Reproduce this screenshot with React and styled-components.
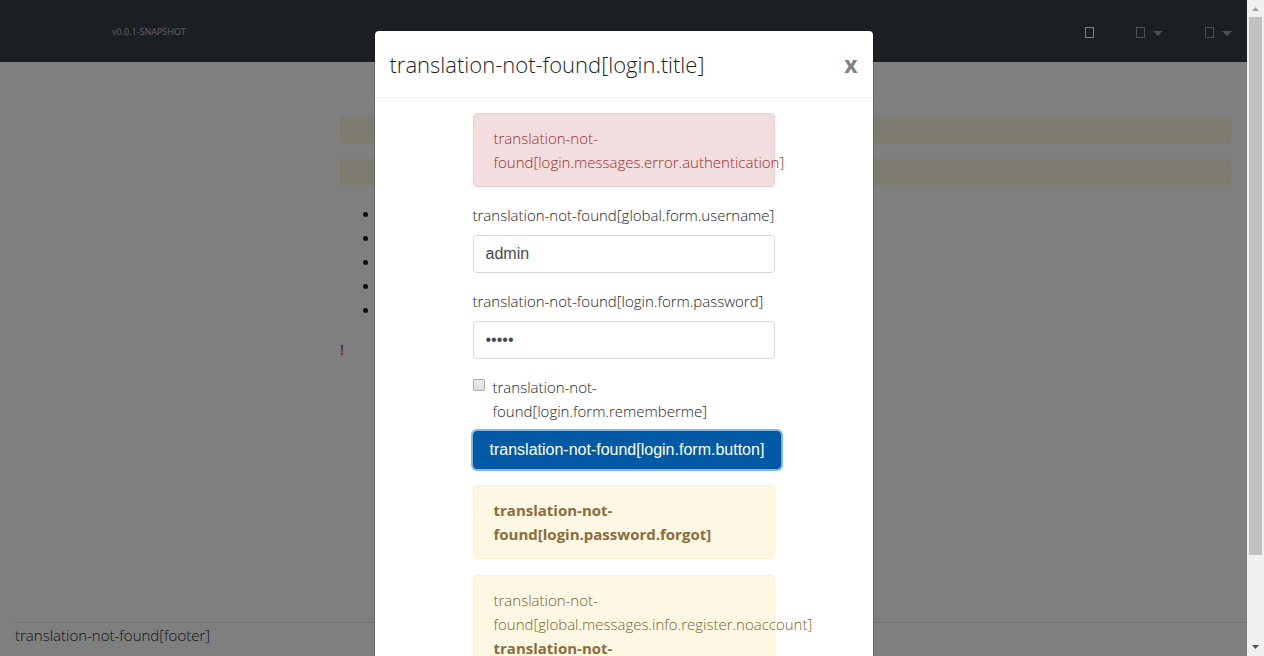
import React from "react";
import styled, { createGlobalStyle } from "styled-components";

const GlobalStyle = createGlobalStyle`
  *, *::before, *::after { box-sizing: border-box; }
  body {
    margin: 0;
    background: #fff;
    color: #1c1e1f;
    font-family: "Open Sans", "Noto Sans", sans-serif;
    font-size: 15px;
    font-weight: 300;
    line-height: 24px;
  }
`;

const Shell = styled.div`
  display: grid;
  grid-template-columns: minmax(0, 1fr) 17px;
  height: 100vh;
  overflow: hidden;
`;

const Page = styled.div`
  position: relative;
  display: flex;
  flex-direction: column;
  min-height: 0;
  overflow: hidden;
`;

const Navbar = styled.nav`
  display: flex;
  align-items: center;
  justify-content: space-between;
  padding: 18px 15px 16px 112px;
  height: 62px;
  background: #373d45;
  color: #c8c9cb;
`;

const Version = styled.span`
  font-size: 9px;
  font-weight: 400;
  color: #c4c5c7;
`;

const NavItems = styled.div`
  display: flex;
  align-items: center;
  gap: 42px;
`;

const NavButton = styled.button`
  display: flex;
  align-items: center;
  gap: 8px;
  padding: 0;
  border: 0;
  background: none;
  color: ${(p) => (p.$active ? "#fff" : "#9b9ea2")};
`;

const Glyph = styled.span`
  width: 9px;
  height: 11px;
  border: 1px solid currentColor;
`;

const Caret = styled.span`
  border: 5px solid transparent;
  border-top-color: currentColor;
  border-bottom: 0;
  margin-top: 2px;
`;

const Main = styled.main`
  display: grid;
  grid-template-columns: 4fr 11fr;
  padding: 55px 16px 0;
  flex: 1;
`;

const Content = styled.section`
  grid-column: 2;
`;

const Alert = styled.div`
  padding: 12px 20px;
  margin-bottom: 16px;
  border: 1px solid ${(p) => (p.$danger ? "#ebcccc" : "#faf2cc")};
  border-radius: 4px;
  background: ${(p) => (p.$danger ? "#f2dede" : "#fcf8e3")};
  color: ${(p) => (p.$danger ? "#a02c2a" : "#7d5f2d")};
`;

const BulletList = styled.ul`
  margin: 0 0 16px;
  padding-left: 40px;
  font-family: "Liberation Sans", sans-serif;
  font-size: 18px;
`;

const Notice = styled.p`
  margin: 0;
  color: #c00030;
  font-weight: 400;
`;

const Footer = styled.footer`
  padding: 0 0 9px 15px;

  p {
    margin: 0;
    border-top: 1px solid #e0e0e0;
  }
`;

const Backdrop = styled.div`
  position: absolute;
  inset: 0;
  overflow: hidden;
  padding-top: 30px;
  background: rgba(0, 0, 0, 0.5);
`;

const Dialog = styled.div`
  max-width: 500px;
  margin: 0 auto;
  border: 1px solid rgba(0, 0, 0, 0.2);
  border-radius: 5px;
  background: #fff;
  background-clip: padding-box;
`;

const DialogHeader = styled.header`
  display: flex;
  align-items: center;
  justify-content: space-between;
  padding: 15px;
  border-bottom: 1px solid #eceeef;
`;

const Title = styled.h4`
  margin: 0;
  font-size: 22px;
  font-weight: 300;
  line-height: 36px;
`;

const Close = styled.button`
  padding: 0;
  border: 0;
  background: none;
  color: #808080;
  font: 700 23px/24px "Open Sans", sans-serif;
`;

const DialogBody = styled.div`
  width: 66.6667%;
  margin: 0 auto;
  padding: 15px;
`;

const Field = styled.div`
  margin-bottom: 16px;

  label {
    display: block;
    margin-bottom: 8px;
    white-space: nowrap;
  }
`;

const TextInput = styled.input`
  display: block;
  width: 100%;
  height: 38px;
  padding: 8px 12px;
  border: 1px solid #d9d9d9;
  border-radius: 4px;
  background: #fff;
  color: #464a4c;
  font: 16px/20px "Liberation Sans", sans-serif;
  outline: 0;
`;

const CheckLabel = styled.label`
  display: flex;
  align-items: flex-start;
  gap: 8px;
  margin-bottom: 8px;
`;

const Checkbox = styled.input`
  appearance: none;
  flex: none;
  width: 12px;
  height: 12px;
  margin: 4px 0 0;
  border: 1px solid #aaa;
  border-radius: 2px;
  background: linear-gradient(#eee, #dcdcdc);
`;

const Submit = styled.button`
  display: block;
  height: 38px;
  margin-bottom: 16px;
  padding: 0 16px;
  border: 1px solid #01549b;
  border-radius: 4px;
  background: #025aa5;
  box-shadow: 0 0 0 2px rgba(2, 117, 216, 0.5);
  color: #fff;
  font: 16px/20px "Liberation Sans", sans-serif;
  white-space: nowrap;
`;

const AlertLink = styled.a`
  color: #8a6d3b;
  font-weight: 700;
  text-decoration: none;
`;

const ScrollTrack = styled.div`
  display: grid;
  grid-template-rows: 17px minmax(0, 1fr) 17px;
  justify-items: center;
  background: #f0f0f0;
`;

const ScrollThumb = styled.div`
  width: 13px;
  height: 86.5%;
  background: #c1c1c1;
`;

const ScrollArrow = styled.svg`
  display: block;
  width: 17px;
  height: 17px;
  fill: ${(p) => (p.$dim ? "#a3a3a3" : "#505050")};
`;

export default function App() {
  return (
    <>
      <GlobalStyle />
      <Shell>
        <Page>
          <Navbar>
            <Version>v0.0.1-SNAPSHOT</Version>
            <NavItems>
              <NavButton $active aria-label="Home">
                <Glyph />
              </NavButton>
              <NavButton aria-label="Language">
                <Glyph />
                <Caret />
              </NavButton>
              <NavButton aria-label="Account">
                <Glyph />
                <Caret />
              </NavButton>
            </NavItems>
          </Navbar>
          <Main>
            <Content>
              <Alert />
              <Alert />
              <BulletList>
                <li />
                <li />
                <li />
                <li />
                <li />
              </BulletList>
              <Notice>!</Notice>
            </Content>
          </Main>
          <Footer>
            <p>translation-not-found[footer]</p>
          </Footer>
          <Backdrop>
            <Dialog role="dialog" aria-labelledby="login-title">
              <DialogHeader>
                <Title id="login-title">translation-not-found[login.title]</Title>
                <Close type="button">x</Close>
              </DialogHeader>
              <DialogBody>
                <Alert $danger>
                  translation-not-found[login.messages.error.authentication]
                </Alert>
                <form onSubmit={(e) => e.preventDefault()}>
                  <Field>
                    <label htmlFor="username">
                      translation-not-found[global.form.username]
                    </label>
                    <TextInput id="username" type="text" defaultValue="admin" />
                  </Field>
                  <Field>
                    <label htmlFor="password">
                      translation-not-found[login.form.password]
                    </label>
                    <TextInput id="password" type="password" defaultValue="admin" />
                  </Field>
                  <CheckLabel htmlFor="rememberMe">
                    <Checkbox id="rememberMe" type="checkbox" />
                    <span>translation-not-found[login.form.rememberme]</span>
                  </CheckLabel>
                  <Submit type="submit">
                    translation-not-found[login.form.button]
                  </Submit>
                </form>
                <Alert>
                  <AlertLink href="#reset">
                    translation-not-found[login.password.forgot]
                  </AlertLink>
                </Alert>
                <Alert>
                  <div>translation-not-found[global.messages.info.register.noaccount]</div>
                  <AlertLink href="#register">
                    translation-not-found[global.messages.info.register.link]
                  </AlertLink>
                </Alert>
              </DialogBody>
            </Dialog>
          </Backdrop>
        </Page>
        <ScrollTrack aria-hidden="true">
          <ScrollArrow $dim viewBox="0 0 17 17">
            <path d="M5 11h7L8.500 7z" />
          </ScrollArrow>
          <ScrollThumb />
          <ScrollArrow viewBox="0 0 17 17">
            <path d="M5 6h7L8.500 10z" />
          </ScrollArrow>
        </ScrollTrack>
      </Shell>
    </>
  );
}
